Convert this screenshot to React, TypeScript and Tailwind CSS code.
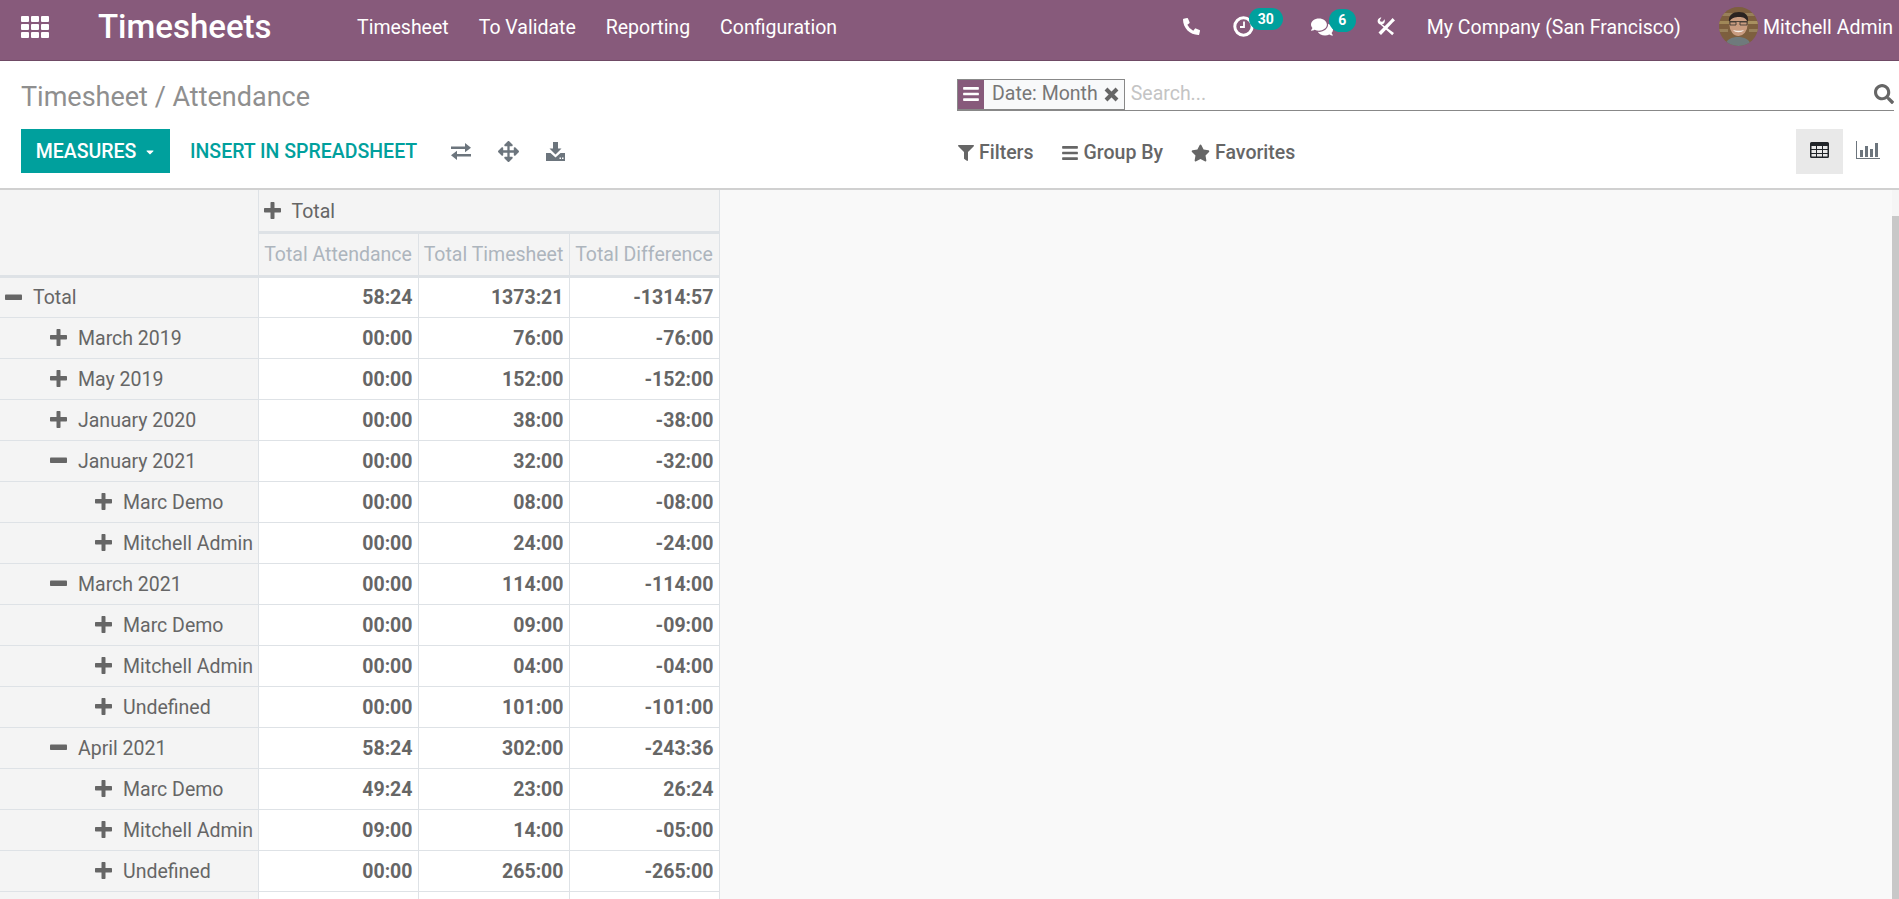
import { FaPhoneAlt, FaComments, FaFilter, FaBars, FaStar, FaSearch, FaArrowsAlt, FaCaretDown } from "react-icons/fa";

const rows = [
  { label: "Total", level: 0, open: true, values: ["58:24", "1373:21", "-1314:57"] },
  { label: "March 2019", level: 1, values: ["00:00", "76:00", "-76:00"] },
  { label: "May 2019", level: 1, values: ["00:00", "152:00", "-152:00"] },
  { label: "January 2020", level: 1, values: ["00:00", "38:00", "-38:00"] },
  { label: "January 2021", level: 1, open: true, values: ["00:00", "32:00", "-32:00"] },
  { label: "Marc Demo", level: 2, values: ["00:00", "08:00", "-08:00"] },
  { label: "Mitchell Admin", level: 2, values: ["00:00", "24:00", "-24:00"] },
  { label: "March 2021", level: 1, open: true, values: ["00:00", "114:00", "-114:00"] },
  { label: "Marc Demo", level: 2, values: ["00:00", "09:00", "-09:00"] },
  { label: "Mitchell Admin", level: 2, values: ["00:00", "04:00", "-04:00"] },
  { label: "Undefined", level: 2, values: ["00:00", "101:00", "-101:00"] },
  { label: "April 2021", level: 1, open: true, values: ["58:24", "302:00", "-243:36"] },
  { label: "Marc Demo", level: 2, values: ["49:24", "23:00", "26:24"] },
  { label: "Mitchell Admin", level: 2, values: ["09:00", "14:00", "-05:00"] },
  { label: "Undefined", level: 2, values: ["00:00", "265:00", "-265:00"] },
];

const indent = ["pl-[5px]", "pl-[50px]", "pl-[95px]"];

function AppsIcon() {
  return (
    <svg width="28" height="22" viewBox="0 0 28 22" fill="#fff">
      {[0, 10, 20].map((x) =>
        [0, 8, 16].map((y) => <rect key={`${x}-${y}`} x={x} y={y} width="8" height="6" rx="1" />)
      )}
    </svg>
  );
}

function PlusIcon() {
  return (
    <svg width="17" height="17" viewBox="0 0 17 17" fill="#666666" className="mr-[11px] shrink-0 -translate-y-[1px]">
      <path d="M6.500 0.500a.8.8 0 0 1 .8-.5h2.400a.8.8 0 0 1 .8.8V6h5.700a.8.8 0 0 1 .8.8v3a.8.8 0 0 1-.8.8H10.500v5.600a.8.8 0 0 1-.8.8H7.300a.8.8 0 0 1-.8-.8V10.600H.8a.8.8 0 0 1-.8-.8v-3A.8.8 0 0 1 .8 6h5.700z" />
    </svg>
  );
}

function MinusIcon() {
  return (
    <svg width="17" height="17" viewBox="0 0 17 17" fill="#666666" className="mr-[11px] shrink-0 -translate-y-[1px]">
      <rect x="0" y="5.500" width="17" height="5.500" rx="0.800" />
    </svg>
  );
}

function ClockIcon() {
  return (
    <svg width="21" height="21" viewBox="0 0 21 21" fill="none" stroke="#fff">
      <circle cx="10.500" cy="10.500" r="8.700" strokeWidth="3" />
      <path d="M11 5.500v5.500H7" strokeWidth="1.800" />
    </svg>
  );
}

function ToolsIcon() {
  return (
    <svg width="19" height="19" viewBox="0 0 19 19" fill="#fff">
      <path d="M1.500 15.500 13.600 3.200 15.600 1l2.400 2.400-2 1.800L4 18z" />
      <path d="M.8 5.200C.2 3.200 1.600.6 4.400.6L2.800 3.200l1 1.600 2.200-.2L7.400 2.200c1.200 2.200-.2 4.800-2.400 5L17 16l-1.800 2.200L3.400 7.400C2.300 7.400 1.200 6.400.8 5.200z" />
    </svg>
  );
}

function ExchangeIcon() {
  return (
    <svg width="20" height="17" viewBox="0 0 20 17" fill="#6c757d">
      <path d="M0 3.500h14V0l6 4.700-6 4.500V6H0z" />
      <path d="M20 11H6V7.800L0 12.300 6 17v-3.500h14z" />
    </svg>
  );
}

function DownloadIcon() {
  return (
    <svg width="19" height="19" viewBox="0 0 19 19" fill="#6c757d">
      <path d="M7 0h5v6.500h3.500L9.500 12.500 3.500 6.500H7z" />
      <path d="M0 11h4.500l5 4.500 5-4.500H19v8H0zM13.500 15.500v1.500H15v-1.500zM16 15.500v1.500h1.500v-1.500z" fillRule="evenodd" />
    </svg>
  );
}

function CloseIcon() {
  return (
    <svg width="15" height="15" viewBox="0 0 15 15" fill="none" stroke="#666666" strokeWidth="4" className="ml-[6px]">
      <path d="M2 2l11 11M13 2 2 13" />
    </svg>
  );
}

function TableIcon() {
  return (
    <svg width="19" height="16" viewBox="0 0 19 16" fill="#212529">
      <path
        fillRule="evenodd"
        d="M1.500 0h16A1.500 1.500 0 0 1 19 1.500v13a1.500 1.500 0 0 1-1.500 1.500h-16A1.500 1.500 0 0 1 0 14.500v-13A1.500 1.500 0 0 1 1.500 0zM1.500 4v3h4.500V4zM7 4v3h5V4zM13 4v3h4.500V4zM1.500 8v3h4.500V8zM7 8v3h5V8zM13 8v3h4.500V8zM1.500 12v2.500h4.500V12zM7 12v2.500h5V12zM13 12v2.500h4.500V12z"
      />
    </svg>
  );
}

function ChartIcon() {
  return (
    <svg width="24" height="18" viewBox="0 0 24 18" fill="#6c757d">
      <path d="M0 0h1v17h23v1H0z" />
      <rect x="4" y="9" width="3" height="7" />
      <rect x="9" y="5" width="3" height="11" />
      <rect x="14" y="8" width="3" height="8" />
      <rect x="19" y="2" width="3" height="14" />
    </svg>
  );
}

// stand-in for the user's photo
function Avatar() {
  return (
    <svg width="39" height="39" viewBox="0 0 39 39" className="rounded-full">
      <rect width="39" height="39" fill="#7d5f3e" />
      <rect x="0" y="6" width="39" height="3" fill="#98805a" />
      <rect x="0" y="14" width="10" height="3" fill="#a08858" />
      <rect x="29" y="14" width="10" height="3" fill="#a89060" />
      <rect x="0" y="22" width="9" height="3" fill="#98805a" />
      <rect x="30" y="22" width="9" height="3" fill="#98805a" />
      <path d="M6 39c1-7 7-9 13-9s12 2 13 9z" fill="#6f7a7c" />
      <ellipse cx="19.500" cy="18" rx="9" ry="11" fill="#c99c80" />
      <path d="M10 15c-1-7 4-10 10-10s10 3 9 10c-2-4-5-5-9-5s-8 1-10 5z" fill="#2a2320" />
      <path d="M11 14.500h17M11 15h6v3h-6zM21 15h7v3h-7z" fill="none" stroke="#33302c" strokeWidth="0.800" />
      <path d="M14 23c2 3 9 3 11 0-2 1-9 1-11 0z" fill="#f4efe9" />
    </svg>
  );
}

export default function App() {
  return (
    <div className="flex h-screen flex-col overflow-hidden bg-[#f9f9f9] font-['Roboto',sans-serif] text-[19.5px] text-[#666666]">
      {/* top navbar */}
      <header className="flex h-[61px] shrink-0 items-center border-b border-[#6f4a65] bg-[#875a7b] pb-[5px] text-white">
        <div className="ml-[21px] w-[77px] -translate-y-[1px]">
          <AppsIcon />
        </div>
        <div className="w-[259px] -translate-y-[1px] text-[33px] font-medium">Timesheets</div>
        <nav className="flex gap-[30px]">
          <span>Timesheet</span>
          <span>To Validate</span>
          <span>Reporting</span>
          <span>Configuration</span>
        </nav>
        <div className="ml-auto flex items-center pr-[6px]">
          <FaPhoneAlt className="mr-[33px] h-[17px] w-[17px] -translate-y-[1px]" />
          <div className="relative mr-[57px] h-[21px] w-[21px] -translate-y-[1px]">
            <ClockIcon />
            <span className="absolute -top-[8px] left-[16px] flex h-[22px] w-[34px] items-center justify-center rounded-full bg-[#00a09d] text-[14px] font-bold">30</span>
          </div>
          <div className="relative mr-[44px] h-[20px] w-[22px] -translate-y-[1px]">
            <FaComments className="h-[20px] w-[22px]" />
            <span className="absolute -top-[8px] left-[18px] flex h-[23px] w-[27px] items-center justify-center rounded-full bg-[#00a09d] text-[14px] font-bold">6</span>
          </div>
          <div className="mr-[31px] -translate-y-[1px]">
            <ToolsIcon />
          </div>
          <span className="mr-[38px]">My Company (San Francisco)</span>
          <div className="mr-[5px] -translate-y-[1px]">
            <Avatar />
          </div>
          <span>Mitchell Admin</span>
        </div>
      </header>

      {/* control panel */}
      <section className="flex h-[129px] shrink-0 border-b-2 border-[#d0d0d0] bg-white">
        <div className="w-[957px] pl-[21px]">
          <h1 className="mt-[18px] text-[27px] leading-[36px] text-[#8f8f8f]">Timesheet / Attendance</h1>
          <div className="mt-[14px] flex items-center">
            <button className="flex h-[44px] w-[149px] items-center justify-center gap-[8px] bg-[#00a09d] pl-[1px] pt-[2px] font-medium text-white">
              MEASURES
              <FaCaretDown className="h-[12px] w-[12px]" />
            </button>
            <button className="ml-[20px] pt-[2px] font-medium text-[#00a09d]">INSERT IN SPREADSHEET</button>
            <div className="ml-[34px] flex items-center gap-[27px]">
              <ExchangeIcon />
              <FaArrowsAlt className="h-[21px] w-[21px] text-[#6c757d]" />
              <DownloadIcon />
            </div>
          </div>
        </div>
        <div className="flex-1 pr-[5px]">
          <div className="mt-[17px] flex h-[33px] items-center border-b border-[#888888]">
            <div className="flex h-[31px] items-stretch border border-[#888888] bg-[#f8f9fa]">
              <span className="flex w-[26px] items-center justify-center bg-[#875a7b] text-white">
                <FaBars className="h-[18px] w-[18px]" />
              </span>
              <span className="flex items-center pl-[8px] pr-[5px] text-[#777777]">
                Date: Month
                <CloseIcon />
              </span>
            </div>
            <span className="ml-[6px] text-[#c4c4c4]">Search...</span>
            <FaSearch className="ml-auto h-[20px] w-[20px] text-[#666666]" />
          </div>
          <div className="mt-[18px] flex items-start">
            <div className="ml-[1px] mt-[9px] flex items-center font-medium">
              <FaFilter className="mr-[5px] h-[16px] w-[16px]" />
              <span>Filters</span>
              <FaBars className="ml-[27px] mr-[5px] h-[18px] w-[18px]" />
              <span>Group By</span>
              <FaStar className="ml-[28px] mr-[5px] h-[18px] w-[19px]" />
              <span>Favorites</span>
            </div>
            <div className="ml-auto flex h-[45px] w-[98px]">
              <div className="flex w-[47px] items-center justify-center bg-[#e9e9e9] pb-[3px]">
                <TableIcon />
              </div>
              <div className="ml-[1px] flex w-[47px] items-center justify-center pb-[3px]">
                <ChartIcon />
              </div>
            </div>
          </div>
        </div>
      </section>

      {/* pivot table */}
      <main className="relative min-h-0 flex-1 overflow-hidden pr-[7px]">
        <table className="table-fixed border-collapse">
          <colgroup>
            <col className="w-[258px]" />
            <col className="w-[160px]" />
            <col className="w-[151px]" />
            <col className="w-[150px]" />
          </colgroup>
          <thead>
            <tr className="h-[42px]">
              <th rowSpan={2} className="border-b-[3px] border-r border-[#dee2e6] bg-[#f4f4f4]"></th>
              <th colSpan={3} className="border-b-[3px] border-r border-[#dee2e6] bg-[#f4f4f4] pl-[5px] pt-[2px] text-left font-normal">
                <span className="flex items-center">
                  <PlusIcon />
                  Total
                </span>
              </th>
            </tr>
            <tr className="h-[44px] text-[#adb5bd]">
              <th className="whitespace-nowrap border-b-[3px] border-r border-[#dee2e6] bg-[#f4f4f4] pt-[2px] text-center font-normal">Total Attendance</th>
              <th className="whitespace-nowrap border-b-[3px] border-r border-[#dee2e6] bg-[#f4f4f4] pt-[2px] text-center font-normal">Total Timesheet</th>
              <th className="whitespace-nowrap border-b-[3px] border-r border-[#dee2e6] bg-[#f4f4f4] pt-[2px] text-center font-normal">Total Difference</th>
            </tr>
          </thead>
          <tbody>
            {rows.map((row, i) => (
              <tr key={i} className="h-[41px]">
                <td className={`whitespace-nowrap border-b border-r border-[#dee2e6] bg-[#f4f4f4] pt-[2px] ${indent[row.level]}`}>
                  <span className="flex items-center">
                    {row.open ? <MinusIcon /> : <PlusIcon />}
                    {row.label}
                  </span>
                </td>
                {row.values.map((v, j) => (
                  <td key={j} className="border-b border-r border-[#dee2e6] bg-white pr-[5px] pt-[2px] text-right font-bold">{v}</td>
                ))}
              </tr>
            ))}
            <tr className="h-[41px]">
              <td className="border-r border-[#dee2e6] bg-[#f4f4f4]"></td>
              <td className="border-r border-[#dee2e6] bg-white"></td>
              <td className="border-r border-[#dee2e6] bg-white"></td>
              <td className="border-r border-[#dee2e6] bg-white"></td>
            </tr>
          </tbody>
        </table>
        {/* scrollbar */}
        <div className="absolute bottom-0 right-0 top-0 w-[7px] bg-[#f5f5f5]">
          <div className="mt-[26px] h-full bg-[#c8c8c8]"></div>
        </div>
      </main>
    </div>
  );
}
